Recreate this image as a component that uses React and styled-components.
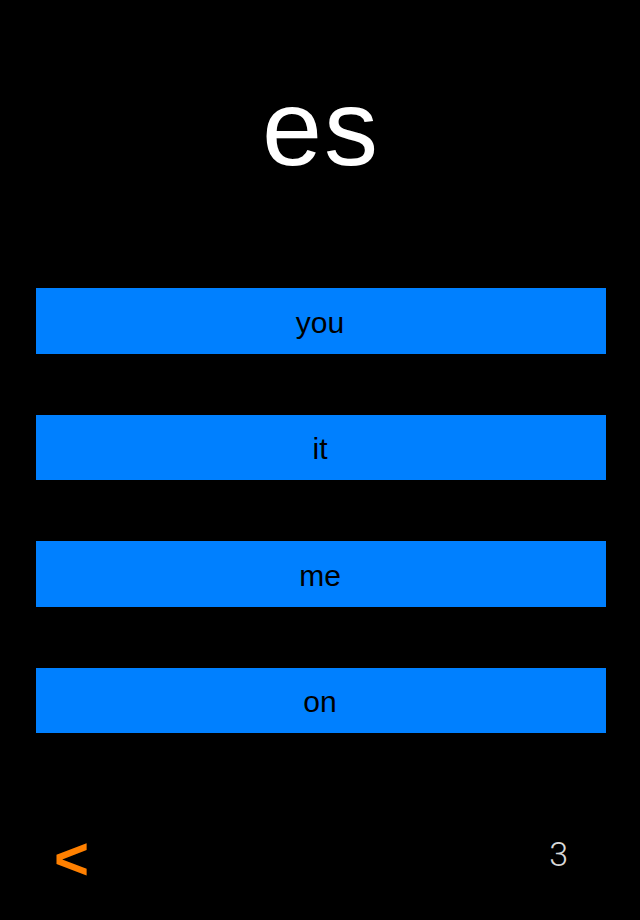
import React from "react";
import styled, { createGlobalStyle } from "styled-components";

const GlobalStyle = createGlobalStyle`
  html, body {
    margin: 0;
    padding: 0;
    background: #000;
  }
`;

const Screen = styled.div`
  width: 640px;
  height: 920px;
  background: #000;
  display: flex;
  flex-direction: column;
  font-family: "Liberation Sans", Arial, sans-serif;
  overflow: hidden;
`;

const Word = styled.h1`
  margin: 74px 0 0;
  height: 108px;
  font-size: 108px;
  line-height: 108px;
  font-weight: 400;
  letter-spacing: 2px;
  padding-left: 2px;
  color: #fff;
  text-align: center;
`;

const Choices = styled.div`
  margin: 106px 34px 0 36px;
  display: flex;
  flex-direction: column;
  gap: 61px;
`;

const Choice = styled.button`
  height: 65.5px;
  border: none;
  background: #0080ff;
  color: #000;
  font-family: inherit;
  font-size: 30px;
  padding: 4px 2px 0 0;
  display: flex;
  align-items: center;
  justify-content: center;
  cursor: pointer;
`;

const Footer = styled.div`
  margin-top: 98px;
  display: flex;
  align-items: flex-start;
  justify-content: space-between;
  padding: 0 71px 0 54px;
`;

const Back = styled.span`
  color: #ff8000;
  font-size: 60px;
  font-weight: 700;
  line-height: 1;
  margin-top: -2px;
`;

const Counter = styled.span`
  color: #d8d8d8;
  font-family: Roboto, "Liberation Sans", sans-serif;
  font-weight: 300;
  font-size: 34px;
  line-height: 1;
  letter-spacing: 1px;
  margin-top: 6px;
`;

const words = ["you", "it", "me", "on"];

export default function App() {
  return (
    <Screen>
      <GlobalStyle />
      <Word>es</Word>
      <Choices>
        {words.map((w) => (
          <Choice key={w}>{w}</Choice>
        ))}
      </Choices>
      <Footer>
        <Back>&lt;</Back>
        <Counter>3</Counter>
      </Footer>
    </Screen>
  );
}
